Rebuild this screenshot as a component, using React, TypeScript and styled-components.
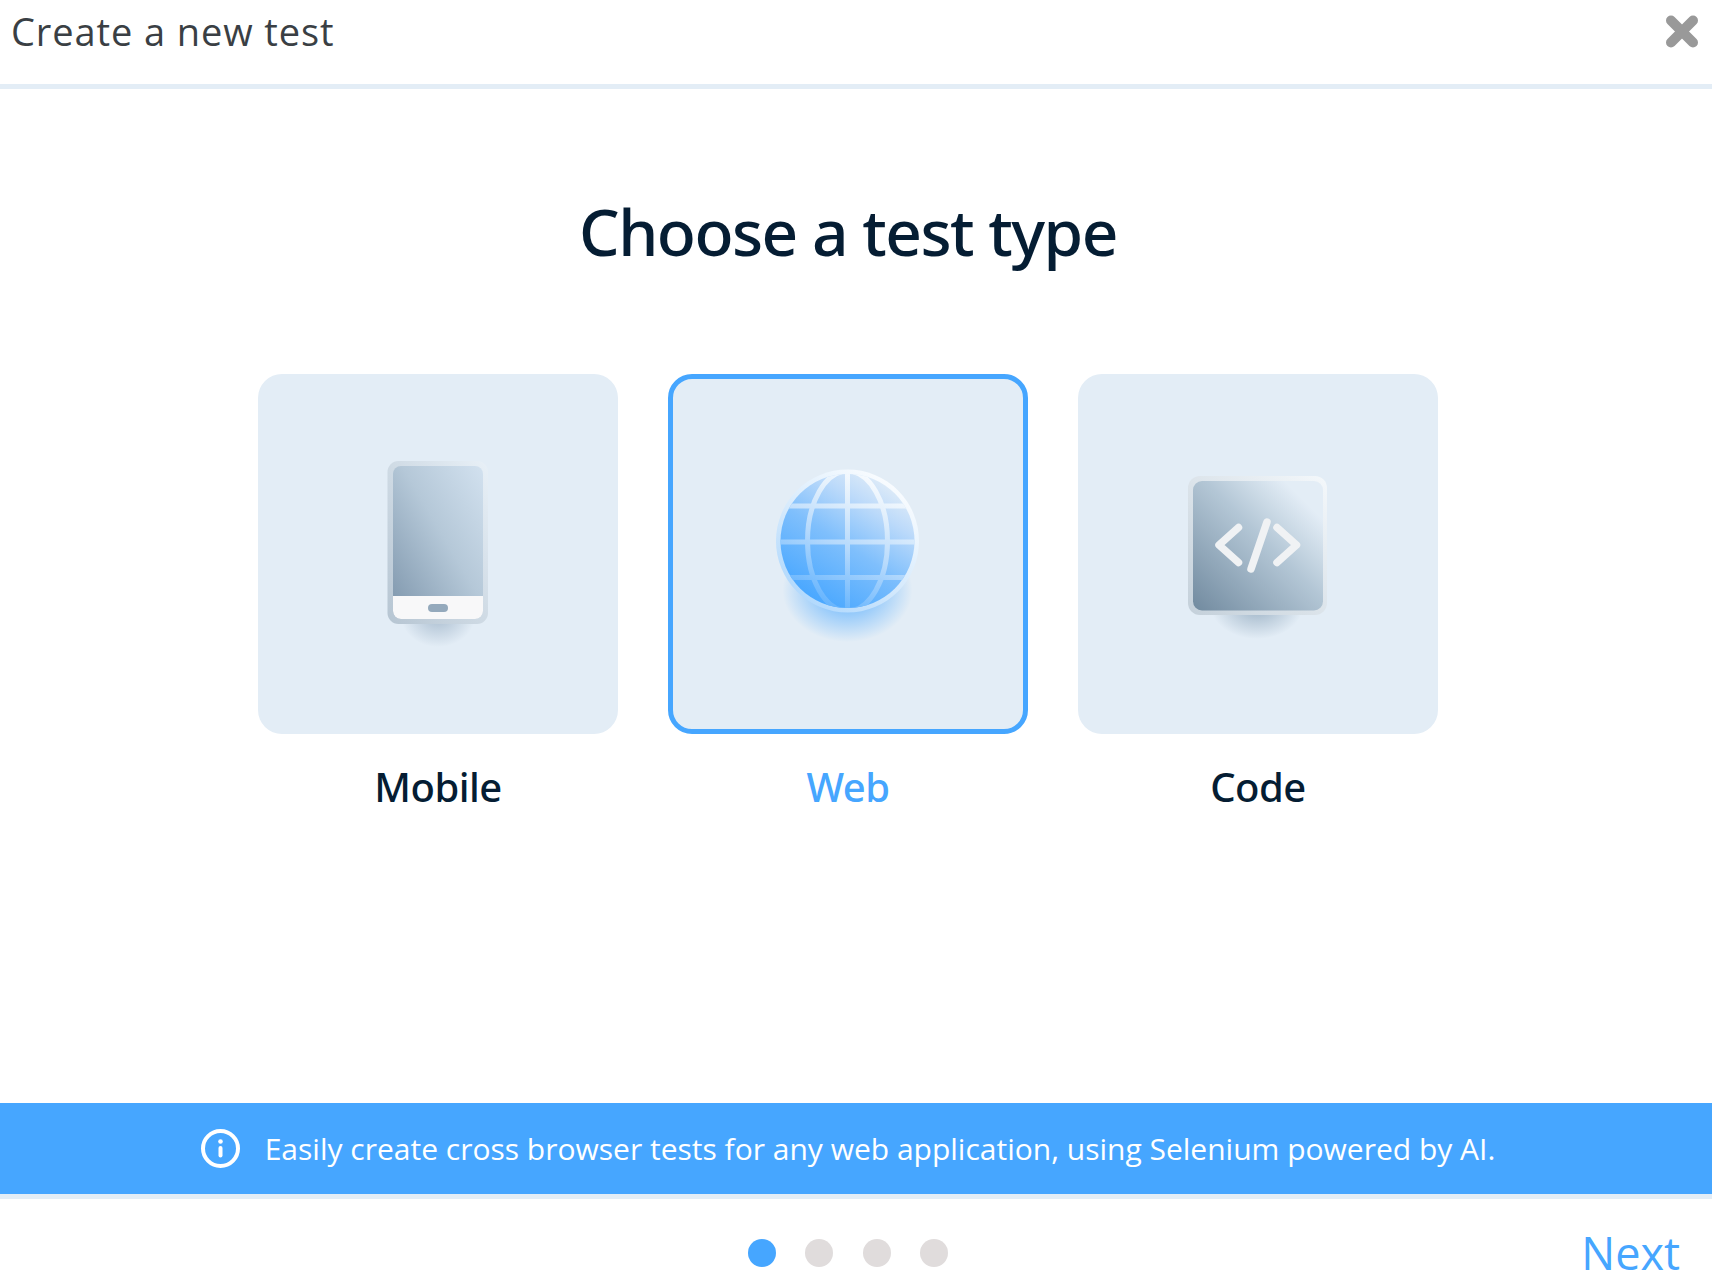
import React from "react";
import styled, { createGlobalStyle } from "styled-components";

const Global = createGlobalStyle`
  html, body { margin: 0; padding: 0; background: #fff; }
  body { font-family: "Open Sans", "Liberation Sans", sans-serif; overflow: hidden; }
  * { box-sizing: border-box; }
`;

const Page = styled.div`
  width: 1712px;
  height: 1287px;
  display: flex;
  flex-direction: column;
  background: #fff;
`;

const Header = styled.header`
  height: 89px;
  flex: none;
  display: flex;
  align-items: center;
  justify-content: space-between;
  padding: 0 14px 22px 11px;
  border-bottom: 5px solid #e3edf6;
`;

const HeaderTitle = styled.h1`
  margin: 0;
  font-size: 38px;
  font-weight: 400;
  letter-spacing: 0.9px;
  color: #3a3f44;
`;

const CloseButton = styled.button`
  width: 32px;
  height: 33px;
  padding: 0;
  border: 0;
  background: none;
  display: block;
  margin-top: 1px;
  svg { display: block; filter: blur(0.5px); }
`;

const Main = styled.main`
  flex: 1;
  width: 1696px;
  display: flex;
  flex-direction: column;
  align-items: center;
`;

const Heading = styled.h2`
  margin: 0;
  padding-top: 95px;
  margin-bottom: 2px;
  font-family: "Noto Sans", "Open Sans", sans-serif;
  font-size: 64px;
  line-height: 96px;
  font-weight: 500;
  letter-spacing: -1.5px;
  color: #051d33;
`;

const Options = styled.div`
  display: flex;
  gap: 50px;
  margin-top: 92px;
`;

const Option = styled.div`
  width: 360px;
  display: flex;
  flex-direction: column;
  align-items: center;
`;

const Tile = styled.div<{ $selected?: boolean }>`
  width: 360px;
  height: 360px;
  border-radius: 24px;
  background: #e3edf6;
  border: ${(p) => (p.$selected ? "5px solid #46a6ff" : "0")};
  display: flex;
  align-items: center;
  justify-content: center;
`;

const OptionLabel = styled.div<{ $selected?: boolean }>`
  margin-top: 25px;
  font-family: "Noto Sans", "Open Sans", sans-serif;
  font-size: 40px;
  line-height: 56px;
  font-weight: 500;
  letter-spacing: -0.5px;
  color: ${(p) => (p.$selected ? "#46a6ff" : "#051d33")};
`;

const Banner = styled.div`
  height: 96px;
  flex: none;
  background: #46a6ff;
  border-bottom: 5px solid #e3edf6;
`;

const BannerInner = styled.div`
  width: 1696px;
  height: 91px;
  display: flex;
  align-items: center;
  justify-content: center;
  gap: 25px;
  color: #fff;
  font-size: 30px;
  svg { display: block; flex: none; }
`;

const Footer = styled.footer`
  height: 88px;
  flex: none;
  width: 1696px;
  display: grid;
  grid-template-columns: 1fr auto 1fr;
  align-items: center;
`;

const Dots = styled.div`
  grid-column: 2;
  display: flex;
  gap: 29.5px;
  margin-top: 20px;
`;

const Dot = styled.span<{ $active?: boolean }>`
  width: 28px;
  height: 28px;
  border-radius: 50%;
  background: ${(p) => (p.$active ? "#46a6ff" : "#e0dcdc")};
`;

const NextLink = styled.a`
  grid-column: 3;
  justify-self: end;
  margin-right: 16px;
  margin-top: 20px;
  font-size: 45px;
  line-height: 60px;
  color: #46a6ff;
`;

const PhoneIcon = () => (
  <svg width="180" height="220" viewBox="348 444 180 220">
    <defs>
      <linearGradient id="phoneScreen" x1="0" y1="1" x2="1" y2="0">
        <stop offset="0" stopColor="#7d95ab" />
        <stop offset="0.55" stopColor="#b5c8d8" />
        <stop offset="1" stopColor="#d2e1ef" />
      </linearGradient>
      <linearGradient id="phoneFrame" x1="0" y1="1" x2="1" y2="0">
        <stop offset="0" stopColor="#b6c5d2" />
        <stop offset="1" stopColor="#e8f0f7" />
      </linearGradient>
      <radialGradient id="phoneShadow">
        <stop offset="0" stopColor="#9fb4c8" stopOpacity="0.85" />
        <stop offset="1" stopColor="#9fb4c8" stopOpacity="0" />
      </radialGradient>
    </defs>
    <ellipse cx="438" cy="616" rx="37" ry="31" fill="url(#phoneShadow)" />
    <rect x="387.5" y="461" width="100.5" height="163" rx="11" fill="url(#phoneFrame)" />
    <rect x="393" y="466" width="90" height="153" rx="8" fill="url(#phoneScreen)" />
    <path d="M393 596h90v15a8 8 0 0 1-8 8h-74a8 8 0 0 1-8-8z" fill="#f8f8f9" />
    <rect x="428" y="604" width="20" height="8" rx="4" fill="#94a9bc" />
  </svg>
);

const GlobeIcon = () => (
  <svg width="180" height="220" viewBox="758 444 180 220">
    <defs>
      <linearGradient id="globeFill" gradientUnits="userSpaceOnUse" x1="815" y1="605" x2="895" y2="480">
        <stop offset="0" stopColor="#46a6ff" />
        <stop offset="0.45" stopColor="#7fbffc" />
        <stop offset="0.75" stopColor="#bcdafa" />
        <stop offset="1" stopColor="#e6eff7" />
      </linearGradient>
      <linearGradient id="globeRim" x1="0.15" y1="1" x2="0.85" y2="0">
        <stop offset="0" stopColor="#a9d5fd" />
        <stop offset="0.45" stopColor="#d6eafc" />
        <stop offset="1" stopColor="#ffffff" />
      </linearGradient>
      <linearGradient id="globeLine" gradientUnits="userSpaceOnUse" x1="815" y1="610" x2="880" y2="470">
        <stop offset="0" stopColor="#58aefe" />
        <stop offset="0.45" stopColor="#b5d9fc" />
        <stop offset="0.75" stopColor="#e3f0fc" />
        <stop offset="1" stopColor="#ffffff" />
      </linearGradient>
      <radialGradient id="globeShadow">
        <stop offset="0" stopColor="#46a6ff" stopOpacity="0.9" />
        <stop offset="1" stopColor="#46a6ff" stopOpacity="0" />
      </radialGradient>
      <clipPath id="globeClip">
        <circle cx="847.5" cy="541" r="67" />
      </clipPath>
    </defs>
    <ellipse cx="847.5" cy="590" rx="65" ry="52" fill="url(#globeShadow)" />
    <circle cx="847.5" cy="541" r="71.5" fill="url(#globeRim)" />
    <circle cx="847.5" cy="541" r="67" fill="url(#globeFill)" />
    <g clipPath="url(#globeClip)" stroke="url(#globeLine)" strokeWidth="5" fill="none">
      <path d="M847.500 470V612" />
      <path d="M775 506H920M775 542H920M775 577.500H920" />
      <ellipse cx="847.500" cy="541" rx="40" ry="70" />
    </g>
  </svg>
);

const CodeIcon = () => (
  <svg width="180" height="220" viewBox="1168 444 180 220">
    <defs>
      <linearGradient id="codeFill" x1="0" y1="1" x2="1" y2="0">
        <stop offset="0" stopColor="#718a9f" />
        <stop offset="0.55" stopColor="#b4c7d6" />
        <stop offset="0.85" stopColor="#e3edf6" />
        <stop offset="1" stopColor="#e3edf6" />
      </linearGradient>
      <linearGradient id="codeFrame" x1="0" y1="1" x2="1" y2="0">
        <stop offset="0" stopColor="#c4d0da" />
        <stop offset="1" stopColor="#f4f8fb" />
      </linearGradient>
      <radialGradient id="codeShadow">
        <stop offset="0" stopColor="#8fa7bc" stopOpacity="0.85" />
        <stop offset="1" stopColor="#8fa7bc" stopOpacity="0" />
      </radialGradient>
    </defs>
    <ellipse cx="1257" cy="606" rx="46" ry="33" fill="url(#codeShadow)" />
    <rect x="1188" y="476" width="139" height="139" rx="12" fill="url(#codeFrame)" />
    <rect x="1193" y="481" width="130" height="129.500" rx="9" fill="url(#codeFill)" />
    <g fill="none" stroke="#f0f2f4" strokeWidth="7.5" strokeLinecap="round" strokeLinejoin="round">
      <path d="M1238.500 527.500L1219 545L1238.500 562.500" />
      <path d="M1277 527.500L1296.500 545L1277 562.500" />
      <path d="M1267 522L1251 569" />
    </g>
  </svg>
);

const InfoIcon = () => (
  <svg width="39" height="39" viewBox="0 0 39 39">
    <circle cx="19.500" cy="19.500" r="17.500" fill="none" stroke="#fff" strokeWidth="4" />
    <circle cx="19.500" cy="12.500" r="2.300" fill="#fff" />
    <rect x="17.500" y="17" width="4" height="11.500" rx="2" fill="#fff" />
  </svg>
);

const CloseIcon = () => (
  <svg width="32" height="33" viewBox="0 0 32 33">
    <path d="M5 5.500L27 27.500M27 5.500L5 27.500" stroke="#999" strokeWidth="10" strokeLinecap="round" />
  </svg>
);

export default function App() {
  return (
    <Page>
      <Global />
      <Header>
        <HeaderTitle>Create a new test</HeaderTitle>
        <CloseButton aria-label="Close"><CloseIcon /></CloseButton>
      </Header>
      <Main>
        <Heading>Choose a test type</Heading>
        <Options>
          <Option>
            <Tile><PhoneIcon /></Tile>
            <OptionLabel>Mobile</OptionLabel>
          </Option>
          <Option>
            <Tile $selected><GlobeIcon /></Tile>
            <OptionLabel $selected>Web</OptionLabel>
          </Option>
          <Option>
            <Tile><CodeIcon /></Tile>
            <OptionLabel>Code</OptionLabel>
          </Option>
        </Options>
      </Main>
      <Banner>
        <BannerInner>
          <InfoIcon />
          <span>Easily create cross browser tests for any web application, using Selenium powered by AI.</span>
        </BannerInner>
      </Banner>
      <Footer>
        <Dots>
          <Dot $active />
          <Dot />
          <Dot />
          <Dot />
        </Dots>
        <NextLink>Next</NextLink>
      </Footer>
    </Page>
  );
}
